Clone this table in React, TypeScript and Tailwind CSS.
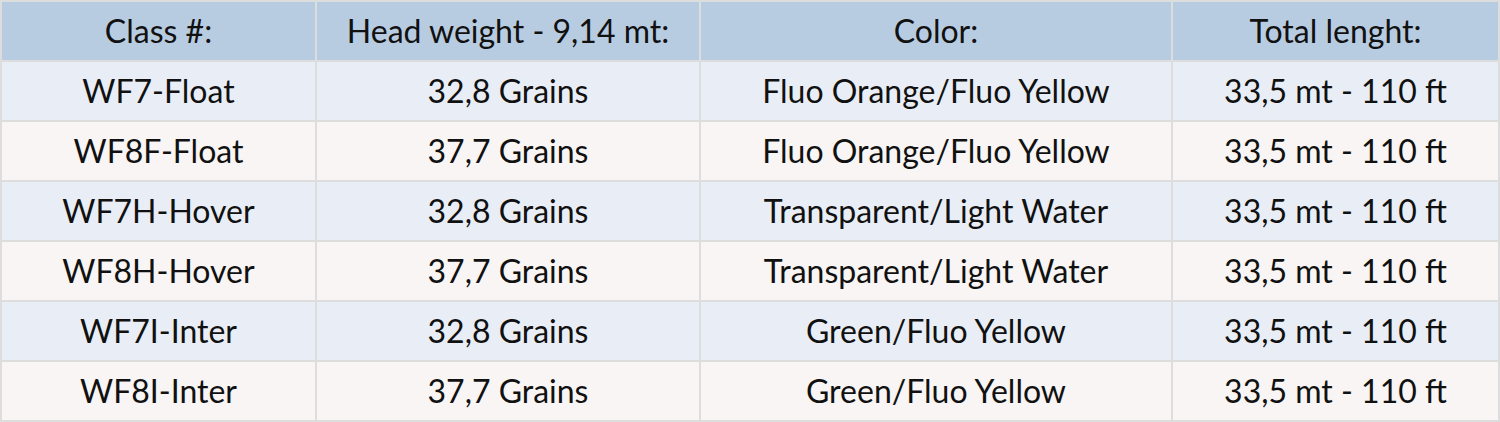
const header = ['Class #:', 'Head weight - 9,14 mt:', 'Color:', 'Total lenght:'];

const rows = [
  ['WF7-Float', '32,8 Grains', 'Fluo Orange/Fluo Yellow', '33,5 mt - 110 ft'],
  ['WF8F-Float', '37,7 Grains', 'Fluo Orange/Fluo Yellow', '33,5 mt - 110 ft'],
  ['WF7H-Hover', '32,8 Grains', 'Transparent/Light Water', '33,5 mt - 110 ft'],
  ['WF8H-Hover', '37,7 Grains', 'Transparent/Light Water', '33,5 mt - 110 ft'],
  ['WF7I-Inter', '32,8 Grains', 'Green/Fluo Yellow', '33,5 mt - 110 ft'],
  ['WF8I-Inter', '37,7 Grains', 'Green/Fluo Yellow', '33,5 mt - 110 ft'],
];

export default function App() {
  return (
    <div className="w-[1500px] h-[422px] bg-white font-['Lato',sans-serif] text-[32px] text-[#111]">
      <div className="grid grid-cols-[313px_382px_470px_325px] auto-rows-[58px] gap-[2px] p-[2px] bg-[#dddddd]">
        {header.map((h) => (
          <div key={h} className="flex items-center justify-center bg-[#b8cce1]">
            {h}
          </div>
        ))}
        {rows.map((row, i) =>
          row.map((cell, j) => (
            <div
              key={`${i}-${j}`}
              className={`flex items-center justify-center ${i % 2 === 0 ? 'bg-[#e9eef6]' : 'bg-[#f8f5f4]'}`}
            >
              {cell}
            </div>
          )),
        )}
      </div>
    </div>
  );
}
